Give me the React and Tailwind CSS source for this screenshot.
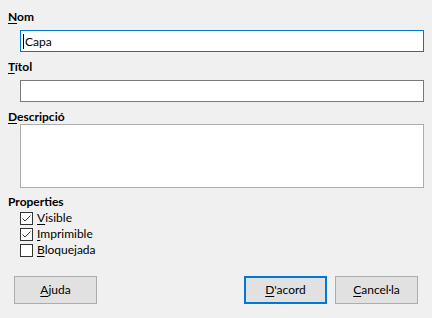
import React from 'react';

const Mn = ({ k, rest }) => (
  <>
    <span className="underline underline-offset-[2px]">{k}</span>
    {rest}
  </>
);

const Check = ({ checked, k, rest }) => (
  <div className="flex items-center h-[16px]">
    <div className="w-[13px] h-[13px] border border-[#333333] bg-white flex items-center justify-center">
      {checked && (
        <svg width="11" height="11" viewBox="0 0 11 11">
          <path d="M1.5 5.5 L4 8 L9.5 2.5" fill="none" stroke="#333333" strokeWidth="1" />
        </svg>
      )}
    </div>
    <span className="ml-[4px]">
      <Mn k={k} rest={rest} />
    </span>
  </div>
);

const Btn = ({ k, rest, primary }) => (
  <div
    className={
      'w-[83px] h-[28px] flex items-center justify-center bg-[#e1e1e1] ' +
      (primary ? 'border-2 border-[#0078d7]' : 'border border-[#adadad]')
    }
  >
    <Mn k={k} rest={rest} />
  </div>
);

export default function App() {
  return (
    <div
      className="w-[432px] h-[318px] bg-[#f0f0f0] text-[12px] leading-[16px] text-black overflow-hidden"
      style={{ fontFamily: 'Lato, "Noto Sans", sans-serif' }}
    >
      <div className="px-2 pt-[9px]">
        <div className="font-bold"><Mn k="N" rest="om" /></div>
        <div className="ml-3 mt-[5px] h-[22px] bg-white border border-[#0078d7] flex items-center pl-[2px]">
          <span className="border-l border-black pl-[1px] leading-[15px]">Capa</span>
        </div>

        <div className="font-bold mt-[7px]"><Mn k="T" rest="ítol" /></div>
        <div className="ml-3 mt-[5px] h-[22px] bg-white border border-[#7a7a7a]" />

        <div className="font-bold mt-[7px]"><Mn k="D" rest="escripció" /></div>
        <div className="ml-3 -mt-[1px] h-[64px] bg-white border border-[#adadad]" />

        <div className="font-bold mt-[6px]">Properties</div>
        <div className="ml-3">
          <Check checked k="V" rest="isible" />
          <Check checked k="I" rest="mprimible" />
          <Check k="B" rest="loquejada" />
        </div>
      </div>

      <div className="flex items-center px-[14px] mt-[18px]">
        <Btn k="A" rest="juda" />
        <div className="flex-1" />
        <Btn k="D" rest="'acord" primary />
        <div className="w-[8px]" />
        <Btn k="C" rest="ancel·la" />
      </div>
    </div>
  );
}
